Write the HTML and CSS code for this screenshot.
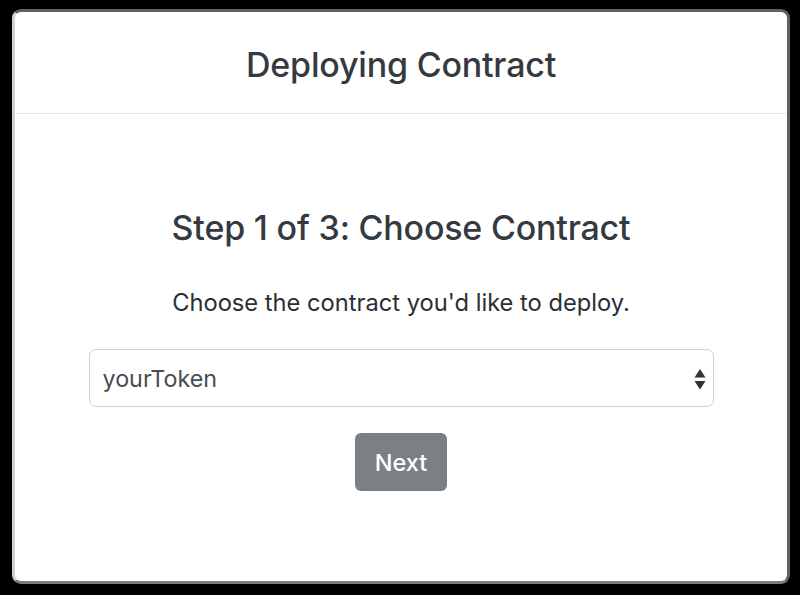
FILE: index.html
```html
<!DOCTYPE html>
<html>
<head>
<meta charset="utf-8">
<title>Deploying Contract</title>
<link rel="stylesheet" href="styles.css">
</head>
<body>
  <div class="modal">
    <div class="modal-header">
      <h1 class="modal-title">Deploying Contract</h1>
    </div>
    <div class="modal-body">
      <h2 class="step-title">Step 1 of 3: Choose Contract</h2>
      <p class="step-text">Choose the contract you'd like to deploy.</p>
      <div class="select">
        <span class="select-value">yourToken</span>
        <svg class="select-arrows" width="12" height="21" viewBox="0 0 12 21">
          <polygon points="6,0 11.5,8.5 0.5,8.5" fill="#333"/>
          <polygon points="0.5,12 11.5,12 6,20.5" fill="#333"/>
        </svg>
      </div>
      <button class="btn-next" type="button">Next</button>
    </div>
  </div>
</body>
</html>
```

FILE: styles.css
```css
html, body {
  margin: 0;
  padding: 0;
  background: #000;
}

body {
  width: 800px;
  height: 595px;
  padding: 9px 10px 0 12px;
  box-sizing: border-box;
  font-family: Inter, "Liberation Sans", Arial, sans-serif;
}

.modal {
  width: 778px;
  height: 575px;
  box-sizing: border-box;
  background: #fff;
  border: 3px solid #5e6266;
  border-left-color: #cfd1d3;
  border-bottom-color: #7a7d80;
  border-radius: 9px;
  display: flex;
  flex-direction: column;
  overflow: hidden;
}

.modal-header {
  height: 102px;
  box-sizing: border-box;
  border-bottom: 1px solid #e6e8ea;
  display: flex;
  align-items: center;
  justify-content: center;
  padding-top: 4px;
}

.modal-title {
  margin: 0;
  font-size: 34px;
  font-weight: 500;
  color: #343a40;
  line-height: 42px;
  letter-spacing: -0.2px;
}

.modal-body {
  display: flex;
  flex-direction: column;
  align-items: center;
  padding-top: 93px;
}

.step-title {
  margin: 0;
  font-size: 34px;
  font-weight: 500;
  color: #343a40;
  line-height: 42px;
  letter-spacing: -0.2px;
}

.step-text {
  margin: 36px 0 0;
  font-size: 23.7px;
  line-height: 36px;
  color: #2b2f33;
}

.select {
  margin-top: 28px;
  width: 625px;
  height: 58px;
  box-sizing: border-box;
  border: 1px solid #cfd3d7;
  border-radius: 7px;
  display: flex;
  align-items: center;
  justify-content: space-between;
  padding: 1px 7px 0 13px;
  color: #474d53;
  font-size: 23.3px;
}

.select-arrows {
  display: block;
  margin-top: 1px;
}

.btn-next {
  margin-top: 26px;
  width: 92px;
  height: 58px;
  border: none;
  border-radius: 6px;
  background: #7b8085;
  color: #fff;
  font-family: Inter, "Liberation Sans", Arial, sans-serif;
  font-size: 23.5px;
  font-weight: 500;
  padding: 0;
  cursor: default;
}
```
